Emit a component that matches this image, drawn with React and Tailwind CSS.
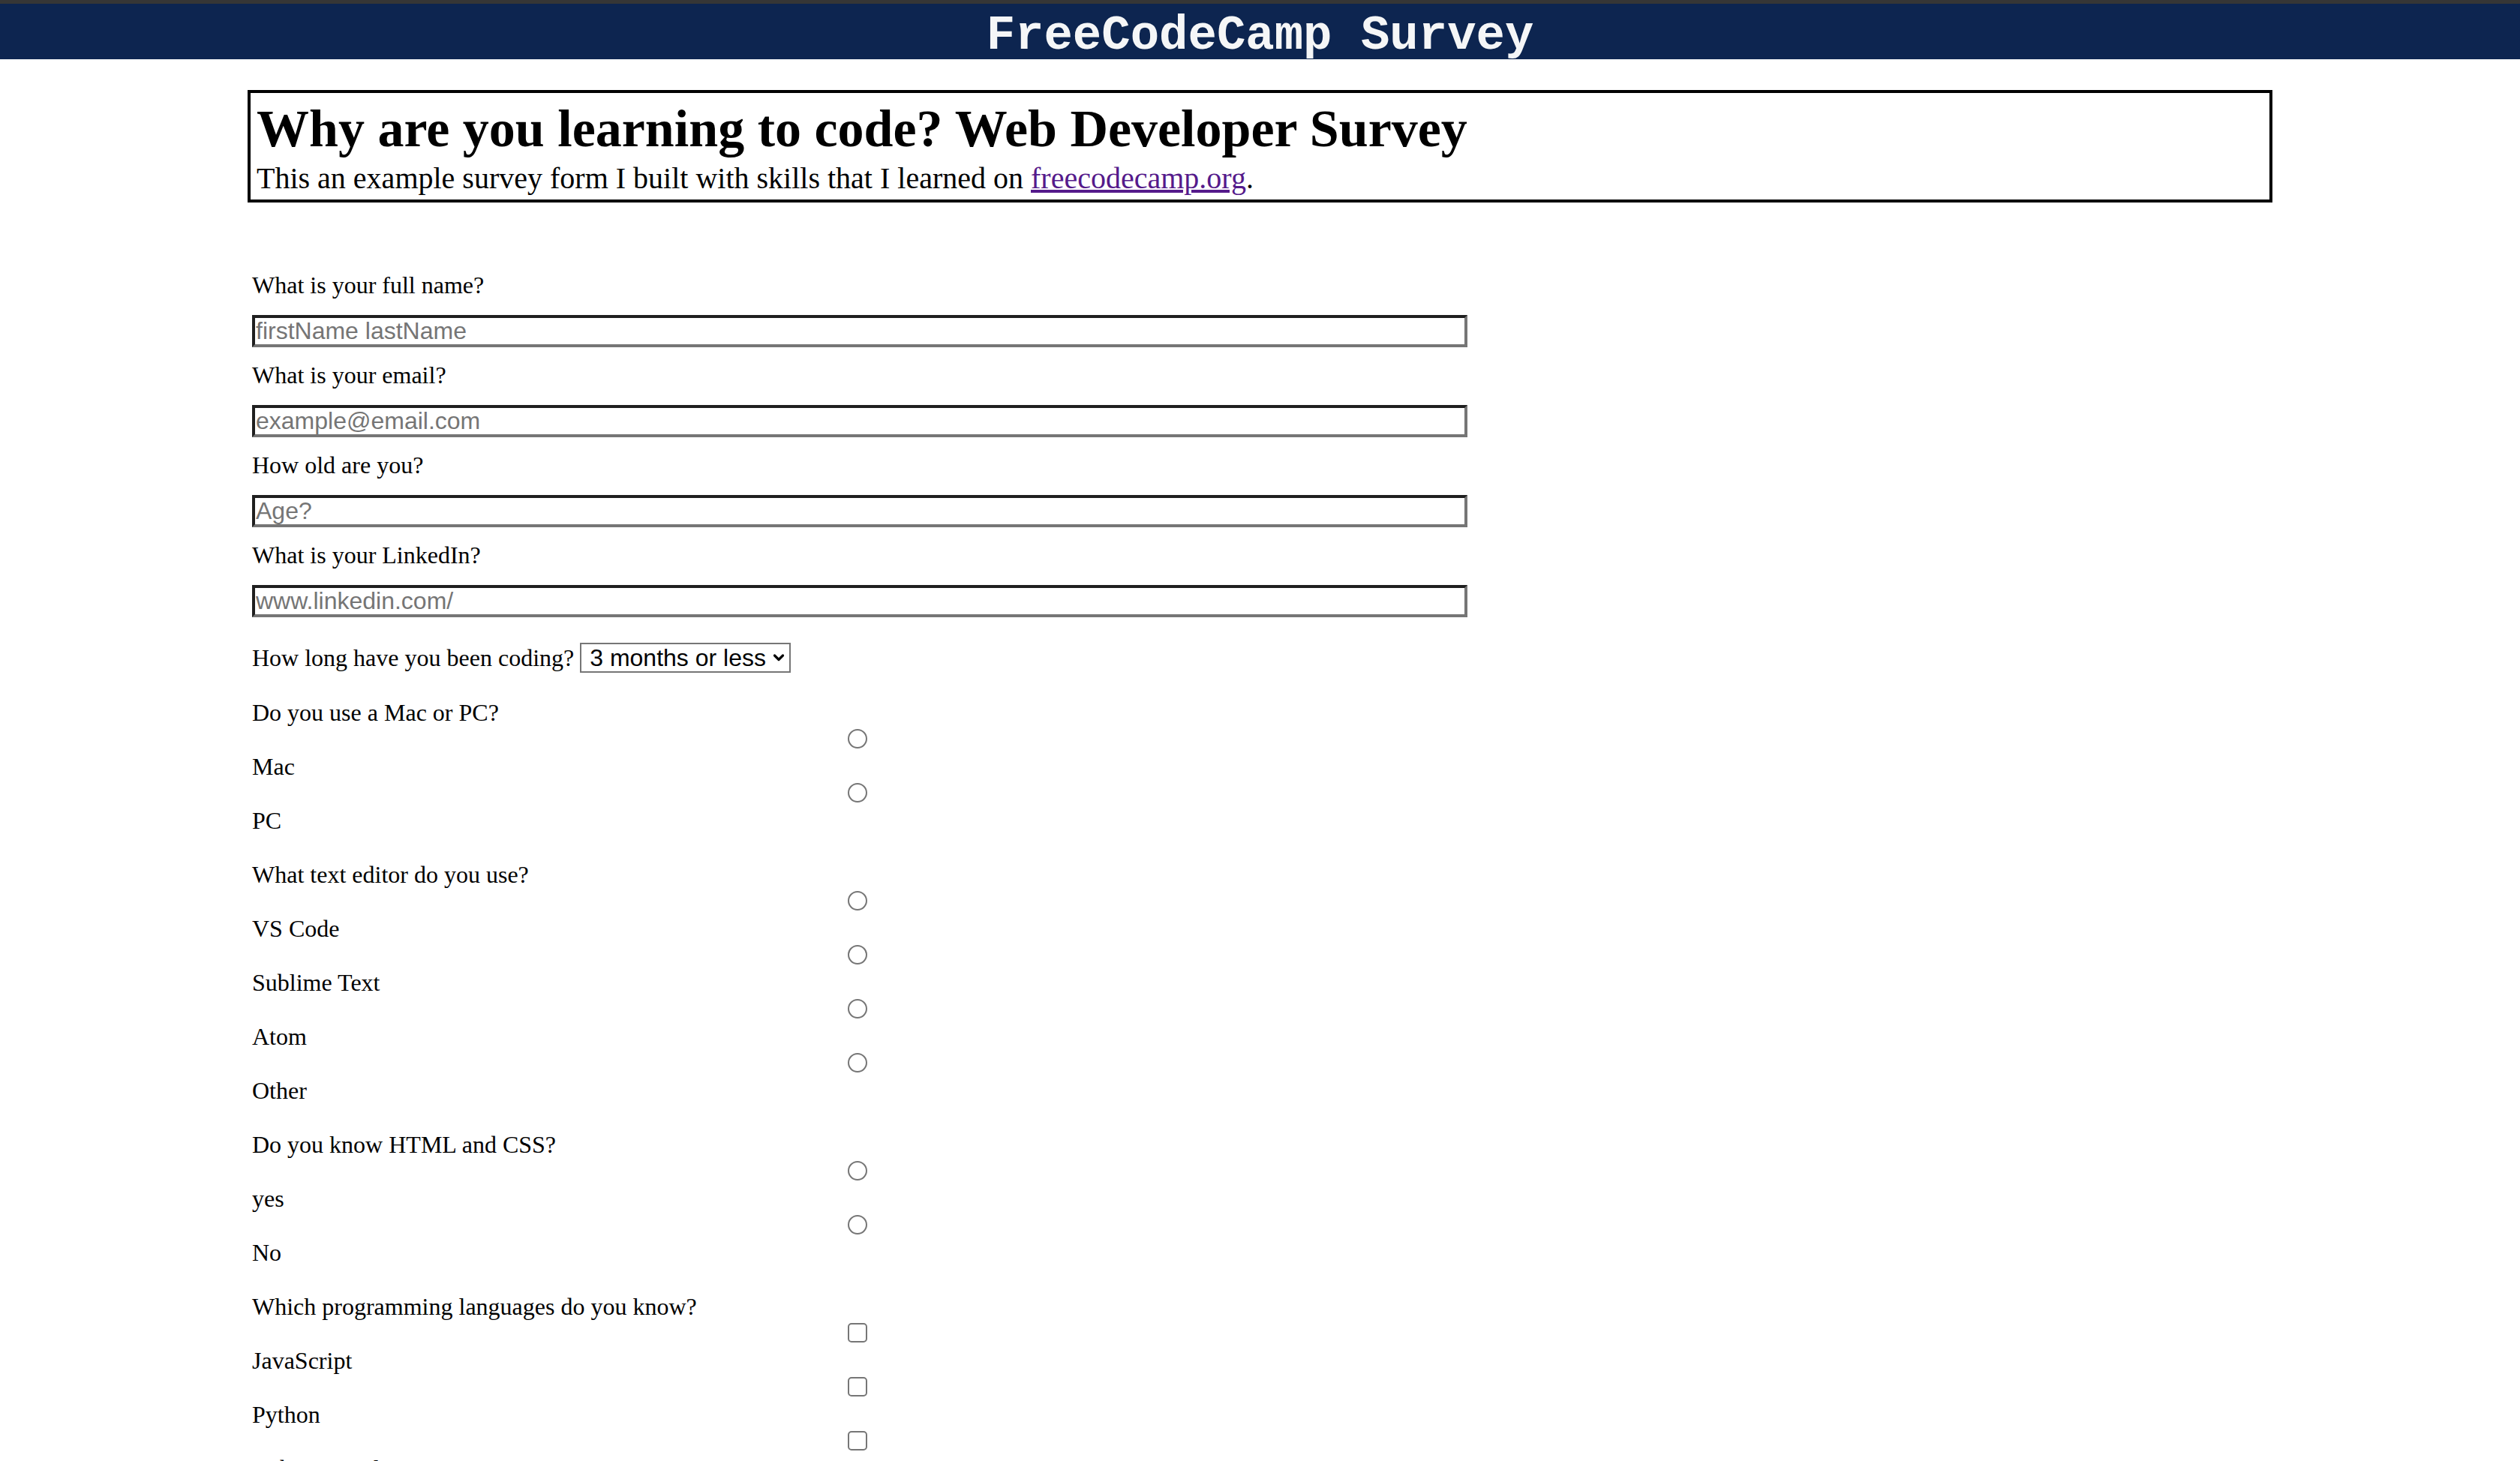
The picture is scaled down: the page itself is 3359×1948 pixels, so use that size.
import React from 'react';

const fieldClass =
  "block w-full h-[43px] border-4 border-solid border-t-[#1f1f1f] border-l-[#1f1f1f] border-r-[#767676] border-b-[#767676] bg-white pl-[1px] font-['Liberation_Sans',Arial,sans-serif] text-[32px] leading-[35px] text-black placeholder:text-[#757575] outline-none";

const TextField = ({ label, placeholder, first }) => (
  <div className={first ? '' : 'mt-[19px]'}>
    <label className="block leading-[37px]">{label}</label>
    <input type="text" placeholder={placeholder} className={`mt-[21px] ${fieldClass}`} />
  </div>
);

const Radio = () => (
  <div className="w-[26px] h-[26px] rounded-full border-2 border-[#767676] bg-white" />
);

const Checkbox = () => (
  <div className="w-[26px] h-[26px] rounded-[5px] border-2 border-[#767676] bg-white" />
);

const Question = ({ title, options, type }) => (
  <div className="mt-[35px]">
    <p className="leading-[37px]">{title}</p>
    {options.map((opt) => (
      <div key={opt}>
        <div className="mt-[3px] ml-[794px]">
          {type === 'checkbox' ? <Checkbox /> : <Radio />}
        </div>
        <label className="block mt-[6px] leading-[37px]">{opt}</label>
      </div>
    ))}
  </div>
);

export default function App() {
  return (
    <div className="min-h-screen bg-white text-black font-['Liberation_Serif','Times_New_Roman',serif] text-[32px]">
      <div className="h-[5px] bg-[#363636]" />
      <header className="h-[74px] bg-[#0d2550] flex items-center justify-center pt-[11px]">
        <h2 className="font-['Liberation_Mono','Courier_New',monospace] font-bold text-[64px] leading-none text-[#f5f6f7]">
          FreeCodeCamp Survey
        </h2>
      </header>

      <main className="w-[2699px] mx-auto mt-[41px] pb-[200px]">
        <div className="border-4 border-black pl-[8px] pt-[8px] pb-[5px]">
          <h1 className="text-[70px] font-bold leading-[80px]">
            Why are you learning to code? Web Developer Survey
          </h1>
          <p className="mt-[3px] text-[40px] leading-[46px]">
            This an example survey form I built with skills that I learned on{' '}
            <a href="#" className="text-[#551a8b] underline">freecodecamp.org</a>.
          </p>
        </div>

        <form className="ml-[6px] w-[1620px] mt-[92px]">
          <TextField first label="What is your full name?" placeholder="firstName lastName" />
          <TextField label="What is your email?" placeholder="example@email.com" />
          <TextField label="How old are you?" placeholder="Age?" />
          <TextField label="What is your LinkedIn?" placeholder="www.linkedin.com/" />

          <div className="mt-[34px] h-[40px] flex items-center gap-[8px]">
            <span className="leading-[37px]">How long have you been coding?</span>
            <div className="h-[40px] w-[281px] border-2 border-[#767676] flex items-center justify-between pl-[11px] pr-[6px] font-['Liberation_Sans',Arial,sans-serif] text-[32px]">
              <span>3 months or less</span>
              <svg width="16" height="12" viewBox="0 0 16 12" fill="none">
                <polyline points="2.5,3 8,8.5 13.5,3" stroke="#000" strokeWidth="3.2" strokeLinecap="round" strokeLinejoin="round" />
              </svg>
            </div>
          </div>

          <Question title="Do you use a Mac or PC?" options={['Mac', 'PC']} />
          <Question
            title="What text editor do you use?"
            options={['VS Code', 'Sublime Text', 'Atom', 'Other']}
          />
          <Question title="Do you know HTML and CSS?" options={['yes', 'No']} />
          <Question
            title="Which programming languages do you know?"
            type="checkbox"
            options={['JavaScript', 'Python', 'Ruby on Rails', 'Java', 'C++']}
          />
        </form>
      </main>
    </div>
  );
}
